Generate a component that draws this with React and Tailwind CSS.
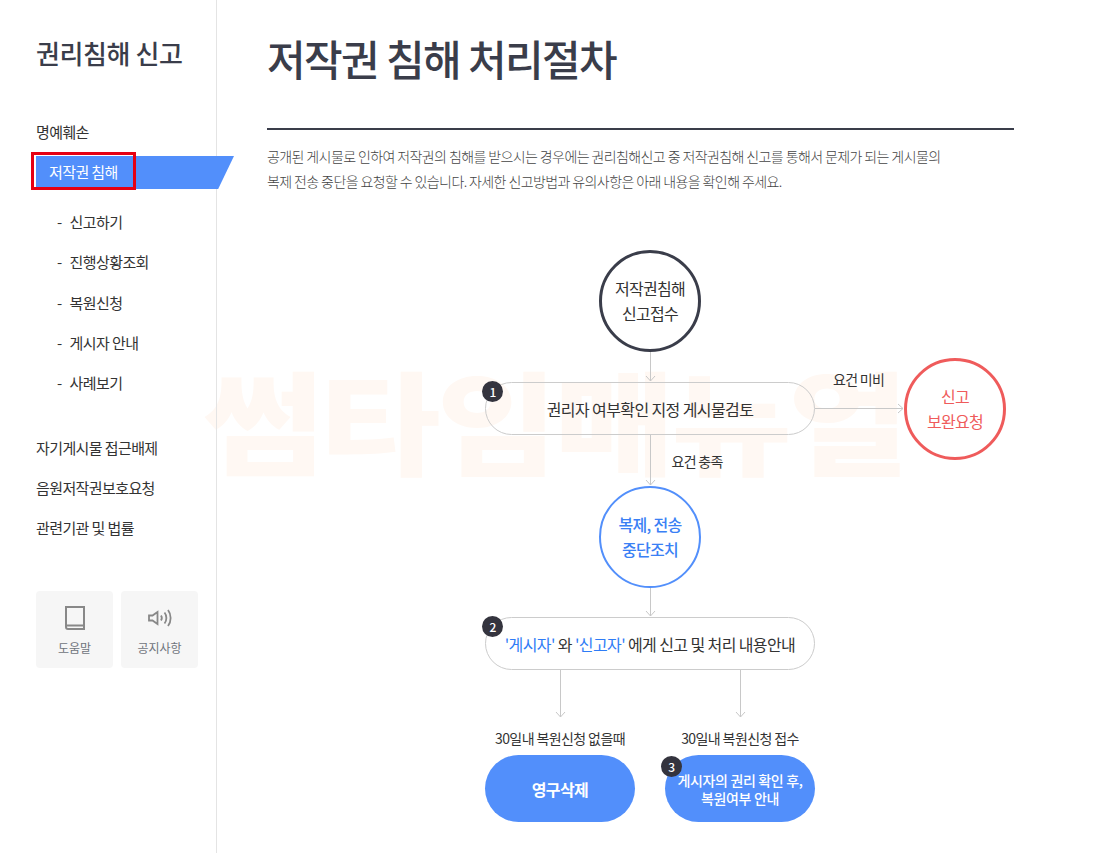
import React from 'react';

const font = { fontFamily: '"Noto Sans CJK KR", "Noto Sans", sans-serif' };

function ArrowDown({ height, className = '' }) {
  return (
    <svg width="11" height={height} viewBox={`0 0 11 ${height}`} fill="none" stroke="#c8c8c8" className={`block shrink-0 ${className}`}>
      <path d={`M5.5 0V${height - 1}M1 ${height - 6}L5.5 ${height - 1}L10 ${height - 6}`} />
    </svg>
  );
}

function Badge({ n, className = '' }) {
  return (
    <span className={`absolute w-[21px] h-[21px] rounded-full bg-[#34343e] text-white text-[12px] font-medium flex items-center justify-center ${className}`}>
      {n}
    </span>
  );
}

function Circle({ className = '', children }) {
  return (
    <div className={`w-[102px] h-[102px] shrink-0 rounded-full flex flex-col items-center justify-center text-[16px] leading-[25px] tracking-[-0.7px] ${className}`}>
      {children}
    </div>
  );
}

function Pill({ badge, children }) {
  return (
    <div className="relative w-[330px] h-[53px] shrink-0 rounded-[27px] border border-[#cccccc] flex items-center justify-center text-[16px] text-[#333] tracking-[-0.6px]">
      <Badge n={badge} className="-left-[4px] -top-[2px]" />
      {children}
    </div>
  );
}

function SideMenu({ children, className = '' }) {
  return <li className={`text-[15px] leading-[20px] text-[#333] tracking-[-0.6px] ${className}`}>{children}</li>;
}

const subMenus = ['신고하기', '진행상황조회', '복원신청', '게시자 안내', '사례보기'];

export default function App() {
  return (
    <div style={font} className="relative h-[853px] overflow-hidden bg-white flex text-[#333]">
      {/* watermark */}
      <div className="absolute left-[203px] top-[338px] text-[112px] leading-[160px] font-black text-[#fff8f3] tracking-[-3px] whitespace-nowrap pointer-events-none origin-left scale-x-[1.17]">
        썸타임매뉴얼
      </div>

      <aside className="relative w-[217px] shrink-0 border-r border-[#e4e4e4] pt-[34px]">
        <h2 className="pl-[36px] text-[26px] leading-[38px] font-medium text-[#3a3d4a] tracking-[-0.4px]">권리침해 신고</h2>
        <ul className="mt-[50px]">
          <SideMenu className="pl-[36px]">명예훼손</SideMenu>
          <li className="relative mt-[14px] ml-[36px] w-[198px] h-[33px] bg-[#528ffb] [clip-path:polygon(0_0,100%_0,92%_100%,0_100%)] flex items-center pl-[13px] text-[15px] text-white tracking-[-0.6px]">
            저작권 침해
          </li>
        </ul>
        <div className="absolute left-[31px] top-[152px] w-[105px] h-[38px] border-[3px] border-[#e60012]" />
        <ul className="mt-[23px] flex flex-col gap-[20.3px]">
          {subMenus.map((m) => (
            <SideMenu key={m} className="pl-[57px] flex gap-[8px]">
              <span>-</span>
              <span>{m}</span>
            </SideMenu>
          ))}
        </ul>
        <ul className="mt-[45px] pl-[36px] flex flex-col gap-[20px]">
          <SideMenu>자기게시물 접근배제</SideMenu>
          <SideMenu>음원저작권보호요청</SideMenu>
          <SideMenu>관련기관 및 법률</SideMenu>
        </ul>
        <div className="mt-[53px] pl-[36px] flex gap-[8px]">
          <div className="w-[77px] h-[77px] rounded-[4px] bg-[#f6f6f6] flex flex-col items-center pt-[15px] text-[12px] text-[#6f747c]">
            <svg width="20" height="24" viewBox="0 0 20 24" fill="none" stroke="#888" strokeWidth="2" className="block">
              <path d="M1 1H19V23H3C2 23 1 22 1 21ZM1 19.5H19" />
            </svg>
            <span className="mt-[9px] leading-[18px]">도움말</span>
          </div>
          <div className="w-[77px] h-[77px] rounded-[4px] bg-[#f6f6f6] flex flex-col items-center pt-[15px] text-[12px] text-[#6f747c]">
            <svg width="24" height="24" viewBox="0 0 24 24" fill="none" stroke="#888" strokeWidth="1.8" className="block">
              <path d="M1 9.5V14.5H4.5L9.5 18V6L4.5 9.5Z" />
              <path d="M13 9.5C14 11 14 13 13 14.5" />
              <path d="M16.5 6.5C19 9.5 19 14.5 16.5 17.5" />
              <path d="M20 4C23.5 8.5 23.5 15.5 20 20" />
            </svg>
            <span className="mt-[9px] leading-[18px]">공지사항</span>
          </div>
        </div>
      </aside>

      <main className="relative pl-[50px] w-[797px] shrink-0">
        <h1 className="pt-[28px] text-[42px] leading-[60px] font-medium text-[#3a3d4a] tracking-[-1.6px]">저작권 침해 처리절차</h1>
        <hr className="mt-[40px] border-0 h-[2px] bg-[#3a3d4a]" />
        <p className="mt-[14px] text-[14px] leading-[25px] font-light text-[#444] tracking-[-0.6px]">
          공개된 게시물로 인하여 저작권의 침해를 받으시는 경우에는 권리침해신고 중 저작권침해 신고를 통해서 문제가 되는 게시물의
          <br />
          복제 전송 중단을 요청할 수 있습니다. 자세한 신고방법과 유의사항은 아래 내용을 확인해 주세요.
        </p>

        <div className="mt-[56px] ml-[218px] w-[330px] flex flex-col items-center">
          <Circle className="border-[3px] border-[#3a3d4a] text-[#333]">
            <span>저작권침해</span>
            <span>신고접수</span>
          </Circle>
          <ArrowDown height={30} />

          <div className="flex items-center h-[53px] self-start">
            <Pill badge={1}>권리자 여부확인 지정 게시물검토</Pill>
            <div className="relative shrink-0 w-[89px] flex items-center">
              <span className="absolute left-[18px] -top-[34px] text-[14px] leading-[20px] tracking-[-0.7px] whitespace-nowrap">요건 미비</span>
              <svg width="89" height="11" viewBox="0 0 89 11" fill="none" stroke="#c8c8c8" className="block">
                <path d="M0 5.5H88M83 1L88 5.5L83 10" />
              </svg>
            </div>
            <Circle className="border-[3px] border-[#ef5b5b] text-[#ef5b5b]">
              <span>신고</span>
              <span>보완요청</span>
            </Circle>
          </div>

          <div className="relative flex justify-center">
            <ArrowDown height={51} />
            <span className="absolute left-[27px] top-[16px] text-[14px] leading-[20px] tracking-[-0.7px] whitespace-nowrap">요건 충족</span>
          </div>

          <Circle className="border-[2px] border-[#528ffb] text-[#3a80f5] font-medium">
            <span>복제, 전송</span>
            <span>중단조치</span>
          </Circle>
          <ArrowDown height={29} />

          <Pill badge={2}>
            <span>
              <span className="text-[#2f7cf6]">'게시자'</span> 와 <span className="text-[#2f7cf6]">'신고자'</span> 에게 신고 및 처리 내용안내
            </span>
          </Pill>

          <div className="w-full flex justify-between pl-[70px] pr-[69px]">
            <ArrowDown height={48} />
            <ArrowDown height={48} />
          </div>

          <div className="mt-[9px] w-full flex justify-between">
            <div className="w-[150px] flex flex-col items-center">
              <span className="text-[14px] leading-[22px] tracking-[-0.6px] whitespace-nowrap">30일내 복원신청 없을때</span>
              <div className="mt-[6px] w-[150px] h-[67px] rounded-[34px] bg-[#528ffb] text-white text-[16px] font-bold flex items-center justify-center tracking-[-0.6px]">
                영구삭제
              </div>
            </div>
            <div className="w-[150px] flex flex-col items-center">
              <span className="text-[14px] leading-[22px] tracking-[-0.6px] whitespace-nowrap">30일내 복원신청 접수</span>
              <div className="relative mt-[6px] w-[150px] h-[67px] rounded-[34px] bg-[#528ffb] text-white text-[14px] leading-[18px] font-medium flex flex-col items-center justify-center tracking-[-0.35px]">
                <Badge n={3} className="-left-[4px] top-[1px]" />
                <span className="whitespace-nowrap">게시자의 권리 확인 후,</span>
                <span>복원여부 안내</span>
              </div>
            </div>
          </div>
        </div>
      </main>
    </div>
  );
}
